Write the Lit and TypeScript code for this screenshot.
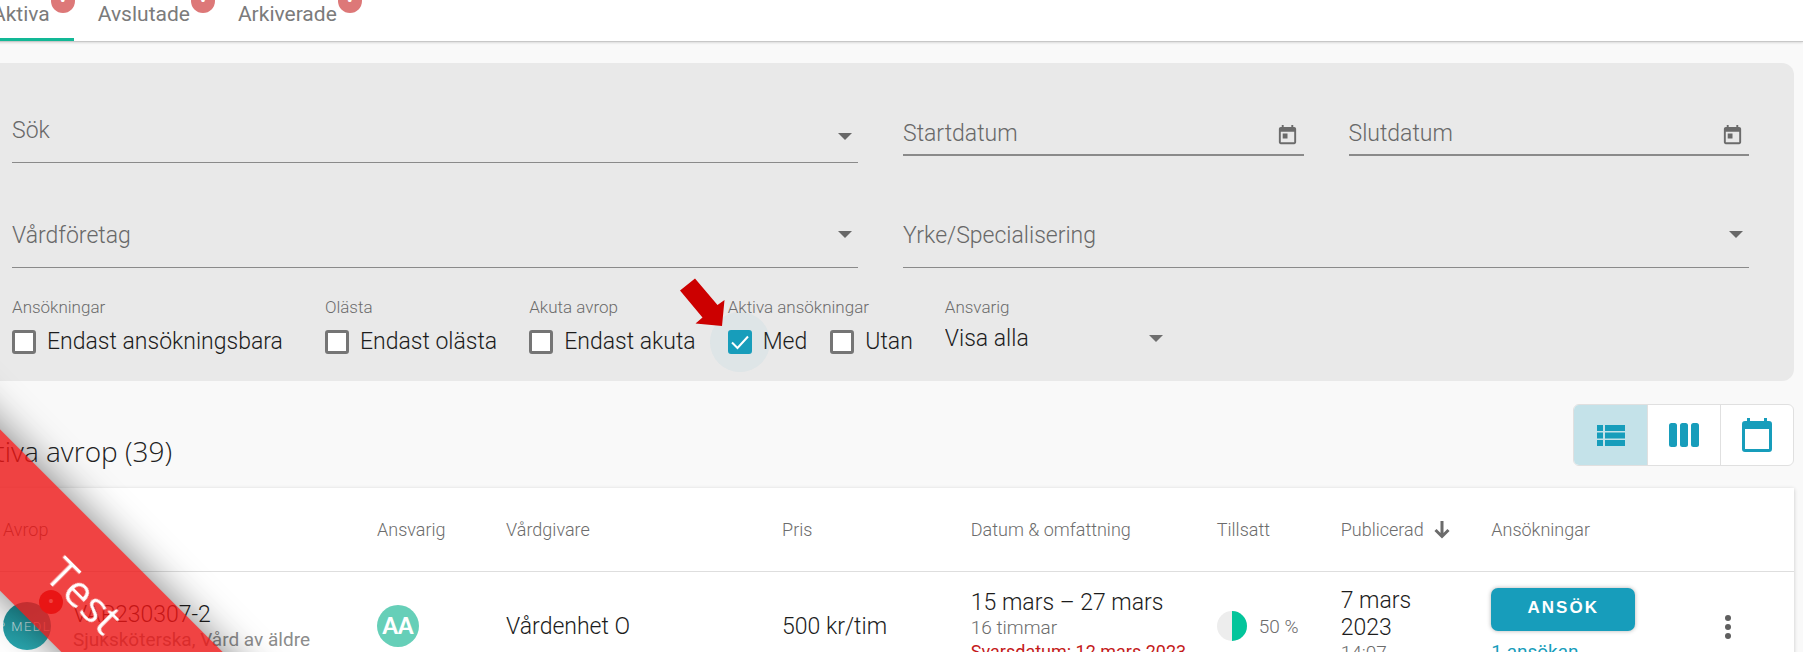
import { LitElement, html, css, svg } from "lit";
import { customElement, property, state } from "lit/decorators.js";

const caret = html`<svg class="caret" viewBox="0 0 14 7" width="14" height="7" aria-hidden="true">
  <path d="M0 0h14L7 7z" fill="currentColor" />
</svg>`;

const todayIcon = html`<svg viewBox="0 0 24 24" width="23" height="23" aria-hidden="true">
  <path
    fill="currentColor"
    d="M19 3h-1V1h-2v2H8V1H6v2H5c-1.11 0-1.99.9-1.99 2L3 19c0 1.1.89 2 2 2h14c1.1 0 2-.9 2-2V5c0-1.1-.9-2-2-2zm0 16H5V8h14v11zM7 10h5v5H7z"
  />
</svg>`;

@customElement("check-box")
export class CheckBox extends LitElement {
  @property() label = "";
  @property({ type: Boolean }) checked = false;

  static styles = css`
    :host {
      display: block;
    }
    .row {
      display: flex;
      align-items: center;
      gap: 11px;
      font-size: 23px;
      line-height: 28px;
      color: #1c1c1c;
      white-space: nowrap;
    }
    .box {
      position: relative;
      display: grid;
      width: 24px;
      height: 24px;
    }
    .box > * {
      grid-area: 1 / 1;
    }
    .box.on::before {
      content: "";
      position: absolute;
      inset: -18px;
      border-radius: 50%;
      background: rgba(23, 157, 187, 0.05);
    }
    .input {
      appearance: none;
      position: relative;
      width: 24px;
      height: 24px;
      margin: 0;
      border: 3px solid #757575;
      border-radius: 3px;
      background: #fff;
    }
    .input:checked {
      border-color: #179dbb;
      background: #179dbb;
    }
    .tick {
      position: relative;
      pointer-events: none;
    }
  `;

  private toggle(e: Event) {
    this.checked = (e.target as HTMLInputElement).checked;
  }

  render() {
    return html`<label class="row">
      <span class="box ${this.checked ? "on" : ""}">
        <input class="input" type="checkbox" .checked=${this.checked} @change=${this.toggle} />
        ${this.checked
          ? html`<svg class="tick" viewBox="0 0 24 24" width="24" height="24">
              <path d="M4 12.500l5.500 5.500L20 6.500" fill="none" stroke="#fff" stroke-width="2" />
            </svg>`
          : ""}
      </span>
      <span>${this.label}</span>
    </label>`;
  }
}

@customElement("app-root")
export class AppRoot extends LitElement {
  @state() private view = "list";

  static styles = css`
    :host {
      display: block;
      height: 100vh;
      overflow: hidden;
      background: #f9f9f9;
      color: #1c1c1c;
      font-family: Roboto, "Liberation Sans", sans-serif;
      font-weight: 300;
    }
    * {
      box-sizing: border-box;
    }
    .tabs {
      display: flex;
      height: 42px;
      margin-left: -32px;
      background: #fff;
      border-bottom: 1px solid #c8c8c8;
      box-shadow: 0 1px 2px rgba(0, 0, 0, 0.12);
    }
    .tab {
      position: relative;
      padding: 0 24px 14px;
      border: 0;
      background: none;
      font: 400 21px/26px Roboto, sans-serif;
      color: #7b7b7b;
    }
    .tab.active {
      border-bottom: 3px solid #12b896;
      padding-bottom: 11px;
    }
    .dot {
      position: absolute;
      display: grid;
      place-items: center;
      width: 24px;
      height: 24px;
      border-radius: 50%;
      color: #fff;
      font: 400 18px/24px Roboto, sans-serif;
    }
    .tab .dot {
      top: -11px;
      right: -1px;
      background: #dd7878;
    }
    .page {
      margin-left: -24px;
      padding: 21px 9px 0 0;
    }
    .filters {
      display: grid;
      grid-template-columns: 1fr 1fr;
      column-gap: 45px;
      padding: 36px 45px 25px 36px;
      border-radius: 12px;
      background: #e9e9e9;
    }
    .field {
      display: flex;
      align-items: center;
      border-bottom: 1px solid #8a8a8a;
      color: #686868;
      position: relative;
      height: 64px;
    }
    .field.lower {
      height: 65px;
      margin-top: 40px;
      padding-top: 2px;
    }
    .field .caret {
      position: absolute;
      right: 6px;
      bottom: 22px;
      pointer-events: none;
    }
    .field.lower .caret {
      bottom: 29px;
    }
    .control {
      appearance: none;
      width: 100%;
      min-width: 0;
      padding: 0;
      border: 0;
      outline: 0;
      border-radius: 0;
      background: none;
      color: #686868;
      font: 300 23px/30px Roboto, sans-serif;
    }
    .control::placeholder {
      color: #686868;
      opacity: 1;
    }
    .dates {
      display: grid;
      grid-template-columns: 1fr 1fr;
      column-gap: 45px;
      align-items: start;
    }
    .dates .field {
      height: 57px;
      border-bottom-width: 2px;
      padding-top: 15px;
    }
    .icon-btn {
      display: grid;
      place-items: center;
      margin: 0;
      padding: 3px 5px 0 0;
      border: 0;
      background: none;
      color: #6b6b6b;
    }
    .checks {
      grid-column: 1 / -1;
      display: flex;
      flex-wrap: wrap;
      margin-top: 29px;
    }
    .group {
      min-width: 0;
      margin: 0 32px 0 0;
      padding: 0;
      border: 0;
    }
    .group.wide {
      margin-right: 42px;
    }
    .caption {
      display: block;
      padding: 0;
      margin-bottom: 11px;
      font-size: 17px;
      line-height: 20px;
      color: #6c6c6c;
    }
    .boxes {
      display: flex;
      gap: 23px;
      position: relative;
    }
    .owner {
      width: 224px;
      margin: 0;
      position: relative;
    }
    .owner .caption {
      margin-bottom: 8px;
    }
    .owner .control {
      color: #1c1c1c;
      line-height: 28px;
      display: block;
      height: 22px;
    }
    .owner .caret {
      position: absolute;
      right: 6px;
      bottom: 14px;
      color: #6f6f6f;
      pointer-events: none;
    }
    .pointer {
      position: absolute;
      left: -48px;
      top: -50px;
      z-index: 1;
      pointer-events: none;
    }
    .bar {
      display: flex;
      justify-content: space-between;
      align-items: flex-end;
      padding: 23px 0 22px;
    }
    .title {
      margin: 0 0 -3px -11px;
      font: 300 28px/36px "Open Sans", "Noto Sans", sans-serif;
      color: #212121;
    }
    .views {
      display: flex;
      border: 1px solid #e0e0e0;
      border-radius: 6px;
      overflow: hidden;
      background: #fff;
    }
    .view {
      display: grid;
      place-items: center;
      width: 73px;
      height: 60px;
      padding: 0;
      border: 0;
      background: none;
      color: #179dbb;
    }
    .view + .view {
      border-left: 1px solid #e0e0e0;
    }
    .view.on {
      background: #c4e2e9;
    }
    .card {
      background: #fff;
      box-shadow: 0 1px 4px rgba(0, 0, 0, 0.2);
    }
    .table {
      width: 100%;
      table-layout: fixed;
      border-collapse: collapse;
    }
    .table th,
    .table td {
      padding: 0;
      text-align: left;
      vertical-align: middle;
    }
    .table th:first-child,
    .table td:first-child {
      padding-left: 27px;
    }
    .table th {
      height: 83px;
      padding-top: 1px;
      border-bottom: 1px solid #dedede;
      font-size: 18px;
      font-weight: 300;
      line-height: 24px;
      color: #6c6c6c;
      white-space: nowrap;
    }
    .table td {
      height: 110px;
      font-size: 23px;
      line-height: 27px;
    }
    .c-call { width: 22.06%; }
    .c-owner { width: 7.1%; }
    .c-unit { width: 15.18%; }
    .c-price { width: 10.38%; }
    .c-dates { width: 13.53%; }
    .c-filled { width: 6.82%; }
    .c-pub { width: 8.28%; }
    .c-apps { width: 11.65%; }
    .sort {
      display: flex;
      align-items: center;
      gap: 9px;
    }
    .call {
      display: flex;
      align-items: center;
      gap: 22px;
      white-space: nowrap;
    }
    .brand {
      position: relative;
      flex: none;
      width: 48px;
      height: 48px;
    }
    .brand .dot {
      top: -12px;
      right: -12px;
      background: #d81919;
    }
    .sub {
      display: block;
      font-size: 19px;
      line-height: 24px;
      font-weight: 300;
      color: #6c6c6c;
      white-space: nowrap;
    }
    .sub.role {
      font-weight: 400;
      color: #8c8c8c;
    }
    .sub.late {
      font-size: 18px;
      font-weight: 400;
      color: #c41a1a;
    }
    .avatar {
      display: grid;
      place-items: center;
      width: 42px;
      height: 42px;
      border-radius: 50%;
      background: #66cfb8;
      color: #fff;
      font: 900 22px/42px Lato, sans-serif;
    }
    .filled {
      display: flex;
      align-items: center;
      gap: 12px;
      color: #6c6c6c;
      font-size: 19px;
    }
    .apply {
      display: block;
      width: 144px;
      height: 43px;
      padding: 0 0 4px;
      margin-bottom: 9px;
      border: 0;
      border-radius: 7px;
      background: #179dbb;
      box-shadow: 0 0 4px rgba(0, 0, 0, 0.3);
      color: #fff;
      font: 700 17px/20px "Liberation Sans", Arial, sans-serif;
      letter-spacing: 2px;
    }
    .link {
      display: block;
      color: #179dbb;
      font-size: 19px;
      font-weight: 400;
      line-height: 24px;
      text-decoration: none;
    }
    .more {
      display: block;
      margin: 0;
      padding: 4px 0 0;
      border: 0;
      background: none;
    }
    .ribbon {
      position: fixed;
      left: -315px;
      bottom: 0;
      width: 800px;
      height: 114px;
      transform: rotate(45deg);
      display: grid;
      place-items: center;
      background: rgba(236, 20, 20, 0.8);
      box-shadow: 0 0 40px rgba(0, 0, 0, 0.5);
      color: #fff;
      font: 400 44px/60px "Open Sans", "Noto Sans", sans-serif;
      pointer-events: none;
      z-index: 2;
    }
  `;

  private viewButton(id: string, label: string, icon: unknown) {
    return html`<button
      class="view ${this.view === id ? "on" : ""}"
      aria-label=${label}
      aria-pressed=${this.view === id}
      @click=${() => (this.view = id)}
    >
      ${icon}
    </button>`;
  }

  render() {
    return html`
      <nav class="tabs">
        ${["Aktiva", "Avslutade", "Arkiverade"].map(
          (t, i) => html`<button class="tab ${i === 0 ? "active" : ""}">${t}<span class="dot">•</span></button>`,
        )}
      </nav>
      <main class="page">
        <form class="filters">
          <div class="field">
            <input class="control" aria-label="Sök" placeholder="Sök" />${caret}
          </div>
          <div class="dates">
            ${["Startdatum", "Slutdatum"].map(
              (d) => html`<div class="field">
                <input class="control" aria-label=${d} placeholder=${d} />
                <button type="button" class="icon-btn" aria-label=${d}>${todayIcon}</button>
              </div>`,
            )}
          </div>
          ${["Vårdföretag", "Yrke/Specialisering"].map(
            (s) => html`<div class="field lower">
              <select class="control" aria-label=${s}><option>${s}</option></select>${caret}
            </div>`,
          )}
          <div class="checks">
            <div class="group wide" role="group" aria-labelledby="g1">
              <span class="caption" id="g1">Ansökningar</span>
              <check-box label="Endast ansökningsbara"></check-box>
            </div>
            <div class="group" role="group" aria-labelledby="g2">
              <span class="caption" id="g2">Olästa</span>
              <check-box label="Endast olästa"></check-box>
            </div>
            <div class="group" role="group" aria-labelledby="g3">
              <span class="caption" id="g3">Akuta avrop</span>
              <check-box label="Endast akuta"></check-box>
            </div>
            <div class="group" role="group" aria-labelledby="g4">
              <span class="caption" id="g4">Aktiva ansökningar</span>
              <div class="boxes">
                <check-box label="Med" checked></check-box>
                <check-box label="Utan"></check-box>
                <svg class="pointer" viewBox="0 0 45 48" width="45" height="48" aria-hidden="true">
                  <path d="M0 12.500L15 0.500L37.500 27L44.500 22L42 48L15.500 45.500L22.500 39.500Z" fill="#cc0000" />
                </svg>
              </div>
            </div>
            <div class="group owner">
              <label class="caption" for="owner">Ansvarig</label>
              <select class="control" id="owner"><option>Visa alla</option></select>${caret}
            </div>
          </div>
        </form>

        <div class="bar">
          <h1 class="title">Aktiva avrop (39)</h1>
          <div class="views">
            ${this.viewButton(
              "list",
              "Lista",
              svg`<svg viewBox="0 0 28 21" width="28" height="21"><path fill="currentColor" d="M0 0h6v6H0zM8 0h20v6H8zM0 7.500h6v6H0zM8 7.500h20v6H8zM0 15h6v6H0zM8 15h20v6H8z"/></svg>`,
            )}
            ${this.viewButton(
              "board",
              "Kolumner",
              svg`<svg viewBox="0 0 30 24" width="30" height="24" fill="currentColor"><rect width="8" height="24" rx="2.500"/><rect x="11" width="8" height="24" rx="2.500"/><rect x="22" width="8" height="24" rx="2.500"/></svg>`,
            )}
            ${this.viewButton(
              "calendar",
              "Kalender",
              svg`<svg viewBox="0 0 30 34" width="30" height="34"><path fill="currentColor" fill-rule="evenodd" d="M5 0h3v3h14V0h3v3h2a3 3 0 0 1 3 3v25a3 3 0 0 1-3 3H3a3 3 0 0 1-3-3V6a3 3 0 0 1 3-3h2zM3 11v20h24V11z"/></svg>`,
            )}
          </div>
        </div>

        <section class="card">
          <table class="table">
            <thead>
              <tr>
                <th class="c-call">Avrop</th>
                <th class="c-owner">Ansvarig</th>
                <th class="c-unit">Vårdgivare</th>
                <th class="c-price">Pris</th>
                <th class="c-dates">Datum &amp; omfattning</th>
                <th class="c-filled">Tillsatt</th>
                <th class="c-pub">
                  <span class="sort">Publicerad
                    <svg viewBox="0 0 18 18" width="18" height="18" aria-hidden="true">
                      <path d="M9 0v15M2.500 9L9 15.500L15.500 9" fill="none" stroke="#6b6b6b" stroke-width="3" />
                    </svg>
                  </span>
                </th>
                <th class="c-apps">Ansökningar</th>
                <th></th>
              </tr>
            </thead>
            <tbody>
              <tr>
                <td>
                  <div class="call">
                    <div class="brand">
                      <svg viewBox="0 0 48 48" width="48" height="48">
                        <defs>
                          <clipPath id="disc"><circle cx="24" cy="24" r="24" /></clipPath>
                          <linearGradient id="sea" x1="0" y1="0" x2="0.600" y2="1">
                            <stop offset="0" stop-color="#1d8f98" />
                            <stop offset="1" stop-color="#2aaab2" />
                          </linearGradient>
                        </defs>
                        <g clip-path="url(#disc)">
                          <rect width="48" height="48" fill="url(#sea)" />
                          <text x="-6" y="29" fill="#cfe9ea" font-family="Roboto" font-size="13" letter-spacing="1.500">P MEDL</text>
                        </g>
                      </svg>
                      <span class="dot">•</span>
                    </div>
                    <div>VAP230307-2<span class="sub role">Sjuksköterska, Vård av äldre</span></div>
                  </div>
                </td>
                <td><div class="avatar">AA</div></td>
                <td>Vårdenhet O</td>
                <td>500 kr/tim</td>
                <td>
                  15 mars – 27 mars
                  <span class="sub">16 timmar</span>
                  <span class="sub late">Svarsdatum: 12 mars 2023</span>
                </td>
                <td>
                  <div class="filled">
                    <svg viewBox="0 0 30 30" width="30" height="30" aria-hidden="true">
                      <circle cx="15" cy="15" r="15" fill="#ededed" />
                      <path d="M15 0a15 15 0 0 1 0 30z" fill="#03c59b" />
                    </svg>
                    50 %
                  </div>
                </td>
                <td>7 mars<br />2023<span class="sub">14:07</span></td>
                <td>
                  <button class="apply">ANSÖK</button>
                  <a class="link" href="#">1 ansökan</a>
                </td>
                <td>
                  <button class="more" aria-label="Mer">
                    <svg viewBox="0 0 50 24" width="50" height="24" fill="#5f5f5f">
                      <circle cx="25" cy="3" r="3" />
                      <circle cx="25" cy="12" r="3" />
                      <circle cx="25" cy="21" r="3" />
                    </svg>
                  </button>
                </td>
              </tr>
            </tbody>
          </table>
        </section>
      </main>
      <div class="ribbon">Test</div>
    `;
  }
}
